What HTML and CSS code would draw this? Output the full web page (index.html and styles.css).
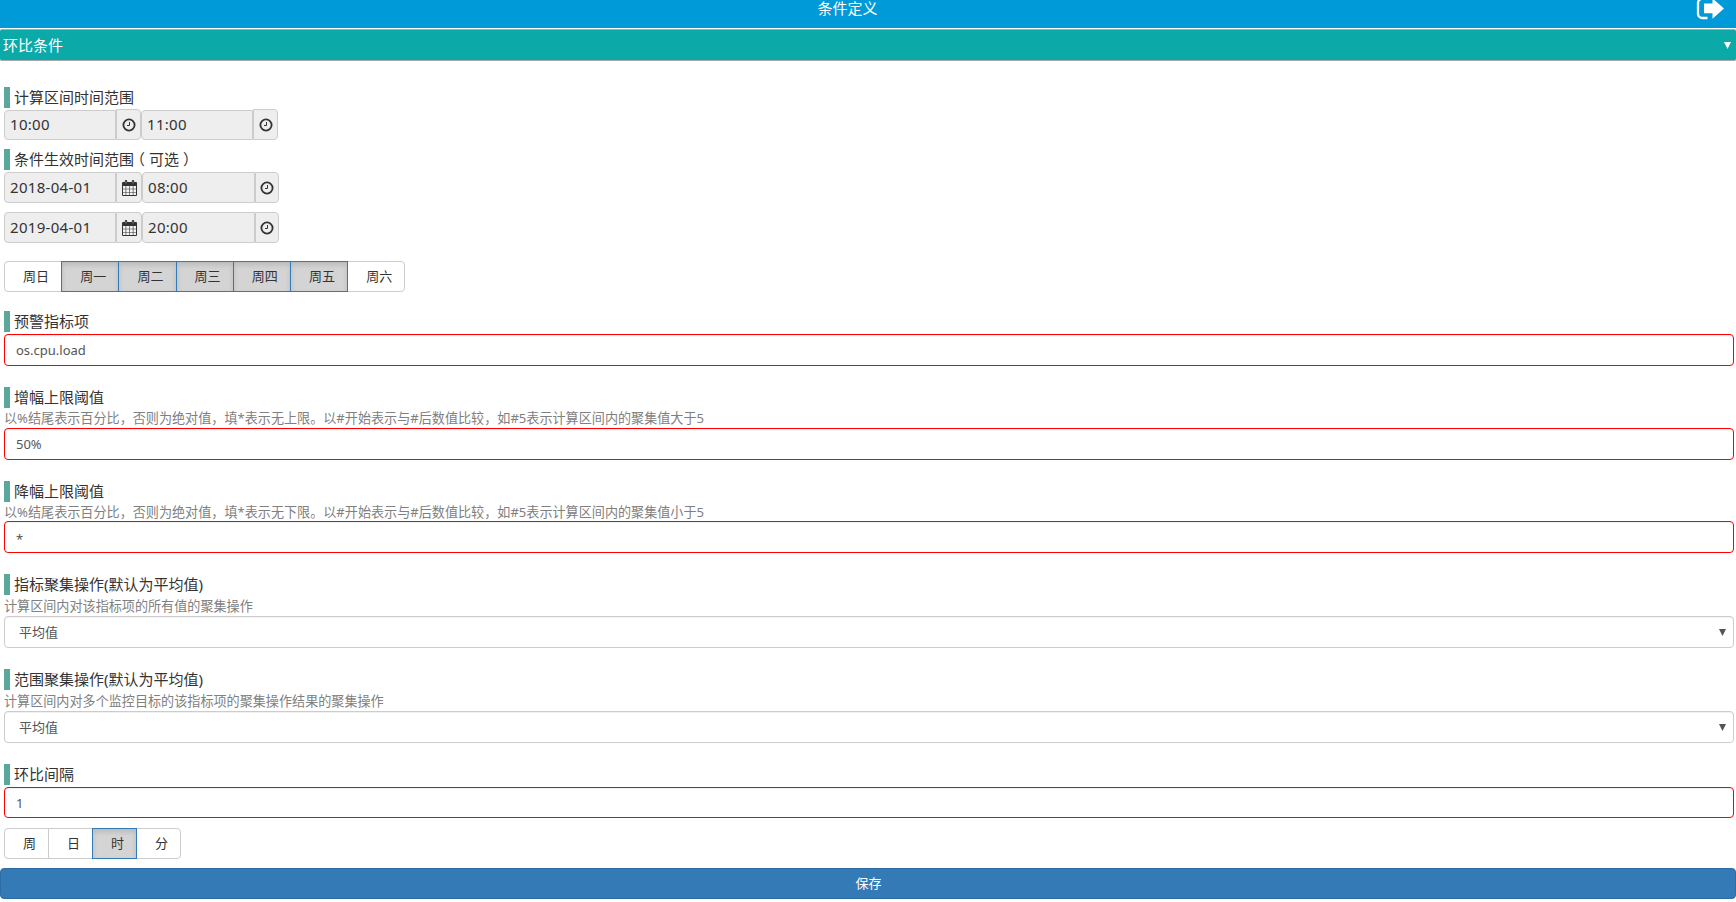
FILE: index.html
```
<!DOCTYPE html>
<html lang="zh-CN">
<head>
<meta charset="utf-8">
<title>条件定义</title>
<link rel="stylesheet" href="styles.css">
</head>
<body>
<svg class="defs" width="0" height="0">
  <symbol id="clock" viewBox="0 0 14 14"><circle cx="7" cy="7" r="5.6" fill="none" stroke="currentColor" stroke-width="1.8"/><path d="M7.5 4v3.5H5" fill="none" stroke="currentColor" stroke-width="1"/></symbol>
  <symbol id="calendar" viewBox="0 0 15 16"><path d="M1.5 2H14a1 1 0 0 1 1 1v12a1 1 0 0 1-1 1H1a1 1 0 0 1-1-1V3a1 1 0 0 1 1-1z" fill="currentColor"/><path d="M1 6h2.6v2.7H1zM4.2 6h3v2.7h-3zM7.8 6h3v2.7h-3zM11.4 6H14v2.7h-2.6zM1 9.3h2.6V12H1zM4.2 9.3h3V12h-3zM7.8 9.3h3V12h-3zM11.4 9.3H14V12h-2.6zM1 12.6h2.6V15H1zM4.2 12.6h3V15h-3zM7.8 12.6h3V15h-3zM11.4 12.6H14V15h-2.6z" fill="#f4f4f4"/><rect x="2.8" y="0" width="2.4" height="4.6" rx="1.1" fill="currentColor"/><rect x="9.8" y="0" width="2.4" height="4.6" rx="1.1" fill="currentColor"/><path d="M4 1.2v2.3M11 1.2v2.3" stroke="#aaa" stroke-width=".7"/></symbol>
</svg>
<header class="topbar">
  <h1 class="title">条件定义</h1>
  <svg class="exit" width="28" height="22" viewBox="0 0 28 22"><path d="M11.5 -1.2H6.2A4.2 4.2 0 0 0 2 3v10.8A4.2 4.2 0 0 0 6.2 18h5.3" fill="none" stroke="#fff" stroke-width="2.3"/><path d="M8 3.5h8.5V-1.5L28 8.4 16.5 18.8v-5.6H8z" fill="#fff"/></svg>
</header>
<div class="panel-head"><span>环比条件</span><svg class="caret" width="7" height="7" viewBox="0 0 7 7"><path d="M0 0h7L3.5 7z" fill="currentColor"/></svg></div>
<main class="form">
  <section class="range">
    <h2 class="label">计算区间时间范围</h2>
    <div class="pickers first">
      <div class="value">10:00</div><div class="addon"><svg class="clock"><use href="#clock"/></svg></div><div class="value">11:00</div><div class="addon end"><svg class="clock"><use href="#clock"/></svg></div>
    </div>
  </section>
  <section class="range effective">
    <h2 class="label">条件生效时间范围<span class="paren open">（</span>可选<span class="paren close">）</span></h2>
    <div class="pickers">
      <div class="value">2018-04-01</div><div class="addon wide"><svg class="calendar"><use href="#calendar"/></svg></div><div class="value second">08:00</div><div class="addon end"><svg class="clock"><use href="#clock"/></svg></div>
    </div>
    <div class="pickers">
      <div class="value">2019-04-01</div><div class="addon wide"><svg class="calendar"><use href="#calendar"/></svg></div><div class="value second">20:00</div><div class="addon end"><svg class="clock"><use href="#clock"/></svg></div>
    </div>
  </section>
  <div class="group days">
    <span class="btn">周日</span><span class="btn active">周一</span><span class="btn active">周二</span><span class="btn active">周三</span><span class="btn active">周四</span><span class="btn active">周五</span><span class="btn">周六</span>
  </div>
  <section class="field"><h2 class="label">预警指标项</h2><div class="input">os.cpu.load</div></section>
  <section class="field"><h2 class="label">增幅上限阈值</h2><p class="hint">以%结尾表示百分比，否则为绝对值，填*表示无上限。以#开始表示与#后数值比较，如#5表示计算区间内的聚集值大于5</p><div class="input">50%</div></section>
  <section class="field"><h2 class="label">降幅上限阈值</h2><p class="hint tight">以%结尾表示百分比，否则为绝对值，填*表示无下限。以#开始表示与#后数值比较，如#5表示计算区间内的聚集值小于5</p><div class="input star">*</div></section>
  <section class="field"><h2 class="label">指标聚集操作(默认为平均值)</h2><p class="hint loose">计算区间内对该指标项的所有值的聚集操作</p><div class="input select"><span>平均值</span><svg class="caret" width="7" height="7" viewBox="0 0 7 7"><path d="M0 0h7L3.5 7z" fill="currentColor"/></svg></div></section>
  <section class="field"><h2 class="label">范围聚集操作(默认为平均值)</h2><p class="hint loose">计算区间内对多个监控目标的该指标项的聚集操作结果的聚集操作</p><div class="input select"><span>平均值</span><svg class="caret" width="7" height="7" viewBox="0 0 7 7"><path d="M0 0h7L3.5 7z" fill="currentColor"/></svg></div></section>
  <section class="field last"><h2 class="label">环比间隔</h2><div class="input short">1</div></section>
  <div class="group units">
    <span class="btn">周</span><span class="btn">日</span><span class="btn active">时</span><span class="btn">分</span>
  </div>
</main>
<div class="save">保存</div>
</body>
</html>
```

FILE: styles.css
```
* { box-sizing: border-box; }
body { margin: 0; height: 902px; overflow: hidden; background: #fff; color: #333; font: 13px/20px "Noto Sans", "Noto Sans CJK SC", sans-serif; }
h1, h2, p { margin: 0; font-weight: 400; }
svg { flex: none; }
.defs { display: block; }
.topbar { display: flex; height: 28px; background: #009ad8; color: #fff; padding-right: 12px; }
.title { flex: 1; padding: 0 30px 0 1px; text-align: center; font-size: 15px; line-height: 16px; }
.exit { display: block; margin-left: -28px; }
.panel-head { display: flex; align-items: center; justify-content: space-between; height: 32px; margin-top: 1px; padding: 0 5px 0 3px; border: solid #a9a9a9; border-width: 1px 0; border-radius: 2px; background: #0ca9a9; color: #fff; font-size: 15px; }
.form { padding: 26px 2px 0 4px; }
.label { height: 21px; padding-left: 4px; border-left: 6px solid #5aa89b; font-size: 15px; line-height: 21px; white-space: nowrap; }
.paren { display: inline-block; }
.open { transform: translateX(-4px); }
.close { transform: translateX(4px); }
.effective { margin-top: 9px; }
.pickers { display: flex; align-items: flex-start; height: 31px; margin-top: 2px; }
.pickers + .pickers { margin-top: 9px; }
.value, .addon { display: flex; align-items: center; height: 31px; border: 1px solid #ccc; background: #eee; }
.value { width: 112px; padding: 0 0 2px 5px; border-radius: 4px 0 0 4px; font-size: 15px; letter-spacing: .3px; }
.first { margin-top: 1px; }
.first .value { height: 30px; margin-top: 1px; }
.addon { width: 25px; justify-content: center; border-radius: 0 4px 4px 0; border-left-width: 1px; }
.wide { width: 26px; }
.second { width: 113px; }
.end { width: 24px; }
.first .end { width: 25px; }
.clock { width: 14px; height: 14px; }
.calendar { width: 15px; height: 16px; }
.group { display: flex; height: 31px; }
.days { margin-top: 18px; }
.btn { width: 58.2px; margin-right: -1px; padding: 0 0 0 18px; border: 1px solid #ccc; line-height: 29px; white-space: nowrap; }
.btn:first-child { border-radius: 4px 0 0 4px; }
.btn:last-child { border-radius: 0 4px 4px 0; }
.btn.active { position: relative; background: #d4d4d4; border-color: #337ab7; box-shadow: inset 0 3px 5px rgba(0,0,0,.125); }
.units { margin-top: 10px; }
.units .btn { width: 45px; }
.field { margin-top: 21px; }
.days + .field { margin-top: 19px; }
.hint { height: 20px; font-size: 13.1px; line-height: 21px; color: #808080; white-space: nowrap; }
.hint.tight { height: 19px; line-height: 20px; }
.hint.loose { height: 21px; line-height: 22px; }
.input { display: flex; align-items: center; height: 32px; border: 1px solid #f00; border-radius: 4px; padding: 0 6px 0 11px; color: #555; box-shadow: inset 0 1px 1px rgba(0,0,0,.06); }
.label + .input { margin-top: 2px; }
.star { padding-top: 3px; }
.short { height: 31px; }
.select { justify-content: space-between; padding: 0 7px 0 14px; border-color: #ccc; }
.save { height: 31px; margin-top: 9px; padding-left: 1px; border: 1px solid #2e6da4; border-radius: 4px; background: #337ab7; color: #fff; text-align: center; line-height: 29px; }
```
